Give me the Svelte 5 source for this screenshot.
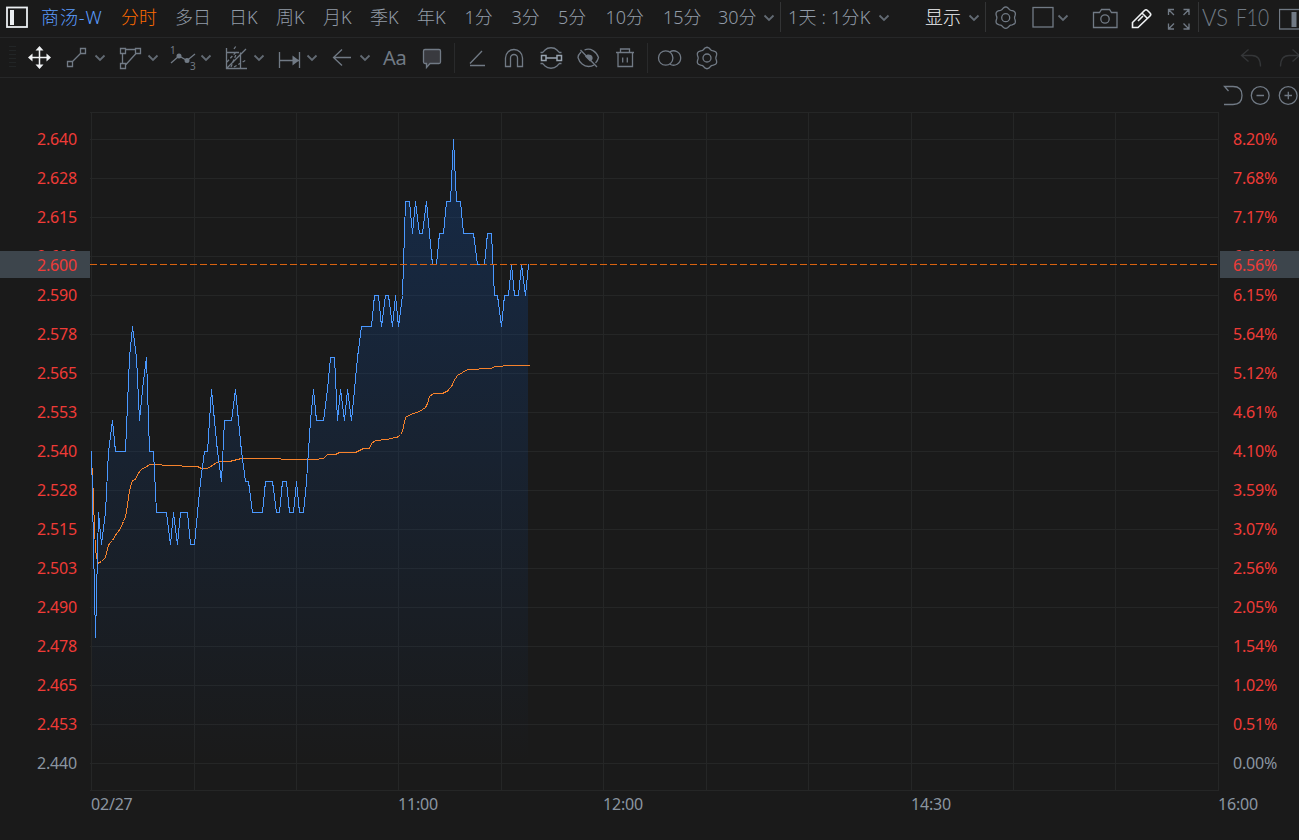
<script>
  const tabs = [
    { label: '分时', width: 54 },
    { label: '多日', width: 54 },
    { label: '日K', width: 47 },
    { label: '周K', width: 47 },
    { label: '月K', width: 47 },
    { label: '季K', width: 47 },
    { label: '年K', width: 47.5 },
    { label: '1分', width: 47 },
    { label: '3分', width: 46.5 },
    { label: '5分', width: 47.5 },
    { label: '10分', width: 57.5 },
    { label: '15分', width: 55 },
    { label: '30分', width: 45 },
  ];
  let active = $state('分时');

  // rounded six-lobe outline used by both settings icons
  function gear(cx, cy) {
    let d = '';
    for (let a = 0; a < 360; a += 6) {
      const t = (a * Math.PI) / 180;
      const r = 9.8 + 0.95 * Math.cos(6 * t);
      d += `${a ? 'L' : 'M'}${(cx + r * Math.sin(t)).toFixed(2)} ${(cy - r * Math.cos(t)).toFixed(2)}`;
    }
    return d + `ZM${cx - 4} ${cy}a4 4 0 1 0 8 0a4 4 0 1 0-8 0`;
  }

  const drawTools = [
    { name: 'line', d: 'M22.5 10.5h5v5h-5zM9.5 23.5h5v5h-5zM14.5 23.5l8-8' },
    { name: 'shape', d: 'M9.5 10.5h5v5h-5zM24.5 10.5h5v5h-5zM9.5 25.5h5v5h-5zM14.5 11.5h10M11.5 15.5v10M25 15.5L14.5 27' },
    { name: 'wave', d: 'M7 25l8-7 8 4.5 8-6.5', solid: 'M12.5 18a2.5 2.5 0 1 0 5 0a2.5 2.5 0 1 0-5 0M20.5 22.5a2.5 2.5 0 1 0 5 0a2.5 2.5 0 1 0-5 0', digits: true },
    { name: 'fib', d: 'M9.5 10v20.5H30M9.5 14.5h12.5M23.5 14.5v16M10 30L29 11', dash: 'M17 11l2-3M10 24l9-10M17 29l12-7M14 29l6-15' },
    { name: 'range', d: 'M9.5 14v16M29.5 14v16M10 22.5h19', solid: 'M22.5 17.5l6.5 5-6.5 5z' },
    { name: 'arrow', d: 'M28 19.5H11M19 11.5l-8.5 8 8.5 8' },
  ];

  const editTools = [
    { name: 'angle', d: 'M12 25.5L24 13M12 27.5h15' },
    { name: 'magnet', d: 'M10.5 28.5V20a8.5 8.5 0 0 1 17 0v8.5h-5V20a3.5 3.5 0 0 0-7 0v8.5z' },
    { name: 'sync', d: 'M8.5 14.500h2c1.500-1 1.500-1.500 2.500-2.500c3-3 9-3 12 0c1 1 1 1.500 2.500 2.500h2M8.500 25.500h2c1.500 1 1.500 1.500 2.500 2.500c3 3 9 3 12 0c1-1 1-1.500 2.500-2.500h2', bright: 'M9.500 17.500h4.500v5h-4.500zM25 17.500h4.500v5H25zM14 20h11' },
    { name: 'hide', d: 'M12 14c-1.500 1.500-3 3.500-3 5.500c1.500 5.500 6 9 10.500 9c2 0 4-.5 5.500-1.500M15.500 12c6-2.500 12 1.500 14 7.500c-.5 2-1.500 4-3 5.500M11.500 12L28 29', solid: 'M16 18.500l5 5c2-.5 3-2.500 2.500-4.500c-1-2.500-4-3-6-2z' },
    { name: 'delete', d: 'M10 14.500h18M14.500 14v-3h9v3M12 15v13.500h14.500V15M16.700 19.500v5M21.300 19.500v5' },
  ];

  const viewTools = [
    { name: 'compare', d: 'M7.500 20a7.200 7.200 0 1 0 14.400 0a7.200 7.200 0 1 0-14.400 0M19 13.700a7.200 7.200 0 1 1 0 12.600' },
    { name: 'settings', d: gear(19, 20) },
  ];

  // price per minute since 09:30, in cents
  const prices = [
    254, 248, 252, 251, 252, 254, 255, 254, 254, 254, 254, 257, 258, 257, 255, 256, 257, 254, 254, 252,
    252, 252, 252, 251, 252, 251, 252, 252, 252, 251, 251, 252, 253, 254, 254, 256, 255, 254, 253, 255,
    255, 255, 256, 255, 254, 253, 253, 252, 252, 252, 252, 253, 253, 253, 252, 252, 253, 253, 252, 252,
    253, 252, 252, 253, 255, 256, 255, 255, 255, 256, 257, 257, 255, 256, 255, 256, 255, 256, 257, 258,
    258, 258, 258, 259, 259, 258, 259, 259, 258, 259, 258, 259, 262, 262, 261, 262, 261, 261, 262, 261,
    260, 260, 261, 261, 262, 262, 264, 262, 262, 261, 261, 261, 261, 260, 260, 260, 261, 261, 259, 259,
    258, 259, 259, 260, 259, 259, 260, 259, 260,
  ];
  // pixel row of each price level
  const levels = {
    248: 637, 251: 544, 252: 512, 253: 481, 254: 451, 255: 420, 256: 389,
    257: 357, 258: 326, 259: 295, 260: 264, 261: 233, 262: 201, 264: 139,
  };
  const px = (i) => Math.round(91.2 + i * 3.413) + 0.5;
  const line = prices.map((p, i) => `${px(i)},${levels[p] + 0.5}`).join(' ');
  const area = `91.5,763 ${line} 528,763`;

  const average =
    '91.5,460 92.5,475 93.5,500 94.5,530 95.5,548 96.5,558 98.5,563 101.5,561.5 105.5,557.5 108.5,545 112.5,540.5 115.5,535 119.5,530 123.5,521.5 125.5,516.5 127.5,505 129.5,491 131.5,483 132.5,481 135.5,479 139.5,471.5 142.5,468.5 145.5,467.5 149.5,464.5 161.5,464.5 162.5,465.5 181.5,465.5 182.5,466.5 197.5,466.5 201.5,468.5 207.5,468.5 218.5,461.5 229.5,461.5 241.5,458.5 280.5,458.5 281.5,459.5 315.5,459.5 323.5,458.5 327.5,454.5 335.5,454.5 339.5,452.5 355.5,452.5 363.5,448.5 369.5,448.5 371.5,443.5 375.5,440.5 386.5,439.5 397.5,437 400.5,434.5 402.5,431.5 405.5,417.5 410.5,414.5 419.5,411.5 425.5,407.5 427.5,403.5 429.5,396.5 433.5,393.5 442.5,393.5 447.5,391 451.5,386.5 454.5,380 457.5,375.5 467.5,369.5 478.5,369.5 479.5,368.5 491.5,368.5 494.5,366.5 502.5,366.5 503.5,365.5 529.5,365.5';

  const rows = [
    ['2.640', '8.20%'], ['2.628', '7.68%'], ['2.615', '7.17%'], ['2.603', '6.66%'],
    ['2.590', '6.15%'], ['2.578', '5.64%'], ['2.565', '5.12%'], ['2.553', '4.61%'],
    ['2.540', '4.10%'], ['2.528', '3.59%'], ['2.515', '3.07%'], ['2.503', '2.56%'],
    ['2.490', '2.05%'], ['2.478', '1.54%'], ['2.465', '1.02%'], ['2.453', '0.51%'],
    ['2.440', '0.00%'],
  ];
  const gridX = [91, 194, 296, 398, 501, 603, 706, 808, 911, 1013, 1115, 1218];
  const times = [
    { label: '02/27', width: 307 },
    { label: '11:00', width: 205 },
    { label: '12:00', width: 308 },
    { label: '14:30', width: 307 },
    { label: '16:00', width: 81 },
  ];
</script>

{#snippet chevron()}
  <svg class="chevron" width="12" height="39" viewBox="0 0 12 39"><path d="M1.500 17.500l4.500 4.500 4.500-4.500" /></svg>
{/snippet}

{#snippet tool(t, width)}
  <svg {width} height="39" viewBox="0 0 {width} 39">
    <path d={t.d} />
    {#if t.dash}<path class="dash" d={t.dash} />{/if}
    {#if t.solid}<path class="solid" d={t.solid} />{/if}
    {#if t.bright}<path class="bright" d={t.bright} />{/if}
    {#if t.digits}
      <text x="6" y="16">1</text>
      <text x="26" y="32">3</text>
    {/if}
  </svg>
{/snippet}

<div class="app">
  <header class="topbar">
    <svg class="panel-toggle" width="41" height="37" viewBox="0 0 41 37">
      <rect x="7" y="7.500" width="20" height="19.500" />
      <path class="solid" d="M10 10h4v15h-4z" />
    </svg>
    <span class="symbol">商汤-W</span>
    <nav class="tabs">
      {#each tabs as t}
        <button class="tab" class:active={active === t.label} style:width="{t.width}px" onclick={() => (active = t.label)}>{t.label}</button>
      {/each}
    </nav>
    {@render chevron()}
    <i class="sep sep--tabs"></i>
    <span class="period">1天 : 1分K</span>
    {@render chevron()}
    <span class="display">显示</span>
    {@render chevron()}
    <i class="sep sep--display"></i>
    <svg width="39" height="37" viewBox="0 0 39 37"><path d={gear(19.7, 17.7)} /></svg>
    <svg width="32" height="37" viewBox="0 0 32 37"><rect x="8" y="7.500" width="20" height="19.500" /></svg>
    {@render chevron()}
    <svg class="camera" width="40" height="37" viewBox="0 0 40 37">
      <path d="M8.500 12.500h6l2-3h8l2 3h5.500v15H8.500zM15.800 19a4.200 4.200 0 1 0 8.400 0a4.200 4.200 0 1 0-8.400 0" />
    </svg>
    <svg class="pencil" width="37" height="37" viewBox="0 0 37 37">
      <path d="M7.500 27.500v-5L19.500 10.500q1.500-1.500 3 0l2.500 2.500q1.500 1.500 0 3L13 27.500zM17 13l5.500 5.500M13 21l5-5" />
    </svg>
    <svg width="36" height="37" viewBox="0 0 36 37">
      <path d="M6.500 15V9.500H12M7 10l5 5M21.500 9.500H27V15M26.500 10l-5 5M6.500 23.500V29H12M7 28.500l5-5M27 23.500V29h-5.500M26.500 28.500l-5-5" />
    </svg>
    <i class="sep sep--vs"></i>
    <svg class="words" width="80" height="37" viewBox="0 0 80 37">
      <text x="3" y="26" textLength="26" lengthAdjust="spacingAndGlyphs">VS</text>
      <text x="37" y="26" textLength="33" lengthAdjust="spacingAndGlyphs">F10</text>
    </svg>
    <svg width="20" height="37" viewBox="0 0 20 37">
      <rect x="0.500" y="9.500" width="24" height="19.500" />
      <path class="solid" d="M12.500 12h5v15h-5z" />
    </svg>
  </header>

  <div class="toolbar">
    <div class="grip"></div>
    <svg class="move" width="37" height="39" viewBox="0 0 37 39">
      <path d="M18.500 10v19M9 19.500h19" />
      <path class="solid" d="M18.500 8l4 4.500h-8zM18.500 31l4-4.500h-8zM7 19.500l4.500-4v8zM30 19.500l-4.500-4v8z" />
    </svg>
    {#each drawTools as t}
      <div class="dropdown">
        {@render tool(t, 36)}
        {@render chevron()}
      </div>
    {/each}
    <span class="text-tool">Aa</span>
    <svg width="37" height="39" viewBox="0 0 37 39">
      <path class="bubble" d="M12 11.500h14q1.500 0 1.500 1.500v11q0 1.500-1.500 1.500H17l-3.500 4v-4H12q-1.500 0-1.500-1.500V13q0-1.500 1.500-1.500z" />
    </svg>
    <i class="sep sep--tool"></i>
    {#each editTools as t}{@render tool(t, 37)}{/each}
    <i class="sep sep--tool"></i>
    {#each viewTools as t}{@render tool(t, 37)}{/each}
    <svg class="undo" width="38" height="39" viewBox="0 0 38 39"><path d="M16.500 11.500l-7 6 7 6M10 17.500h10q8.500 0 8.500 11" /></svg>
    <svg class="redo" width="29" height="39" viewBox="0 0 29 39"><path d="M22.500 11.500l7 6-7 6M29 17.500H19q-8.500 0-8.500 11" /></svg>
  </div>

  <div class="zoombar">
    <svg width="79" height="34" viewBox="0 0 79 34">
      <path d="M4 26.500h9q9 0 9-9t-9-9H4.500l4 4.500M31.300 17.500a8.900 8.900 0 1 0 17.800 0a8.900 8.900 0 1 0-17.800 0M36.500 17.500h7.500M59.300 17.500a8.900 8.900 0 1 0 17.800 0a8.900 8.900 0 1 0-17.800 0M64.500 17.500h7.500M68.300 13.700v7.500" />
    </svg>
  </div>

  <main class="chart">
    <div class="axis axis--price">
      {#each rows as [price], i}
        <span class:flat={i === rows.length - 1}>{price}</span>
      {/each}
      <b class="badge">2.600</b>
    </div>

    <svg class="plot" width="1129" height="679" viewBox="90 112 1129 679">
      <defs>
        <linearGradient id="fade" gradientUnits="userSpaceOnUse" x1="0" y1="139" x2="0" y2="763">
          <stop offset="0" stop-color="#0f4898" stop-opacity="0.36" />
          <stop offset="1" stop-color="#0f4898" stop-opacity="0" />
        </linearGradient>
      </defs>
      <g class="grid">
        {#each gridX as x}<path d="M{x + 0.5} 112V791" />{/each}
        <path d="M90 112.500h1129M90 790.500h1129" />
        {#each rows as _, i}<path d="M90 {139.5 + i * 39}h1129" />{/each}
      </g>
      <polygon points={area} fill="url(#fade)" />
      <polyline class="average" points={average} />
      <polyline class="price" points={line} />
      <path class="last" d="M90 264.500h1128" />
    </svg>

    <div class="axis axis--percent">
      {#each rows as [, percent], i}
        <span class:flat={i === rows.length - 1}>{percent}</span>
      {/each}
      <b class="badge">6.56%</b>
    </div>
  </main>

  <footer class="times">
    {#each times as t}<span style:width="{t.width}px">{t.label}</span>{/each}
  </footer>
</div>

<style>
  :global(body) { background: #1a1a1a; overflow: hidden; }

  .app {
    width: 1299px;
    height: 840px;
    overflow: hidden;
    background: #1a1a1a;
    color: #929ca8;
    font-family: "Noto Sans", "Noto Sans CJK SC", sans-serif;
  }

  svg { display: block; flex-shrink: 0; fill: none; stroke: #717a85; stroke-width: 1.3; }
  .solid { fill: #717a85; stroke: none; }
  .chevron { stroke-width: 1.8; stroke: #626a73; }

  .topbar {
    display: flex;
    height: 37px;
    border-bottom: 1px solid #262728;
    font-size: 18px;
    font-weight: 300;
    line-height: 34px;
    white-space: nowrap;
  }
  .topbar .chevron { margin-top: -2px; }
  .panel-toggle { stroke: #eceff2; stroke-width: 1.8; }
  .panel-toggle .solid { fill: #eceff2; }
  .symbol { width: 80px; color: #5b9cff; letter-spacing: 0.9px; }
  .tabs { display: flex; }
  .tab {
    height: 34px;
    padding: 0;
    border: 0;
    background: none;
    color: inherit;
    font: inherit;
    line-height: 34px;
    text-align: left;
    cursor: pointer;
  }
  .tab.active { color: #ff6a00; }
  .period { width: 90px; letter-spacing: 0.2px; }
  .display { width: 43px; margin-left: 35px; color: #f2f4f6; }
  .words text { fill: #717a85; stroke: none; font: 300 24px/1 Lato, sans-serif; }
  .pencil { stroke: #f0f2f4; stroke-width: 1.6; }
  .camera { margin-left: 16px; }

  .sep { width: 1px; flex-shrink: 0; background: #333435; }
  .sep--tabs { height: 30px; margin: 2px 7px 0 5px; }
  .sep--display { height: 30px; margin: 2px 0 0 5px; }
  .sep--vs { height: 30px; margin: 2px 0 0 0; }
  .sep--tool { height: 30px; margin: 5px 3px 0 4px; background: #292a2b; }

  .toolbar { display: flex; height: 39px; border-bottom: 1px solid #262728; }
  .grip {
    width: 7px;
    height: 24px;
    margin: 8px 5px 0 9px;
    background: repeating-linear-gradient(#222526 0 1px, transparent 1px 4px);
  }
  .move { stroke: #f0f2f4; stroke-width: 1.5; }
  .move .solid { fill: #f0f2f4; }
  .dropdown { display: flex; width: 53px; }
  .dash { stroke-dasharray: 3 2; }
  .bright { stroke: #98a3af; stroke-width: 1.5; }
  .bubble { fill: #393a3f; }
  .toolbar text { fill: #717a85; stroke: none; font: 10px "Noto Sans", sans-serif; }
  .text-tool {
    width: 30px;
    padding-left: 7px;
    color: #717a85;
    font: 400 20px/40px "Noto Sans", sans-serif;
    letter-spacing: -0.3px;
  }
  .undo { margin-left: auto; }
  .undo, .redo { stroke: #343638; }

  .zoombar { display: flex; justify-content: flex-end; height: 34px; }

  .chart { display: flex; height: 679px; font: 16px "Noto Sans", sans-serif; letter-spacing: -0.2px; }
  .axis { position: relative; display: flex; flex-direction: column; box-sizing: border-box; padding-top: 7px; color: #f03b37; }
  .axis span { height: 39px; line-height: 40px; }
  .axis .flat { color: #8b95a1; }
  .axis--price { width: 90px; padding-left: 37px; }
  .axis--percent { width: 80px; padding-left: 14px; }
  .badge {
    position: absolute;
    top: 139px;
    left: 0;
    right: 0;
    height: 27px;
    background: #3d454c;
    font-weight: 400;
    line-height: 28px;
  }
  .axis--price .badge { padding-left: 37px; }
  .axis--percent .badge { left: 1px; padding-left: 13px; }

  .plot { shape-rendering: crispEdges; stroke-width: 1; }
  .grid { stroke: #252626; }
  .plot polygon { stroke: none; }
  .price { stroke: #4a98ff; }
  .average { stroke: #f6822c; }
  .last { stroke: #d9620f; stroke-dasharray: 7 3; }

  .times { display: flex; padding-left: 91px; font: 16px/26px "Noto Sans", sans-serif; letter-spacing: -0.2px; color: #8b95a1; }
  .times span { flex-shrink: 0; }
</style>
